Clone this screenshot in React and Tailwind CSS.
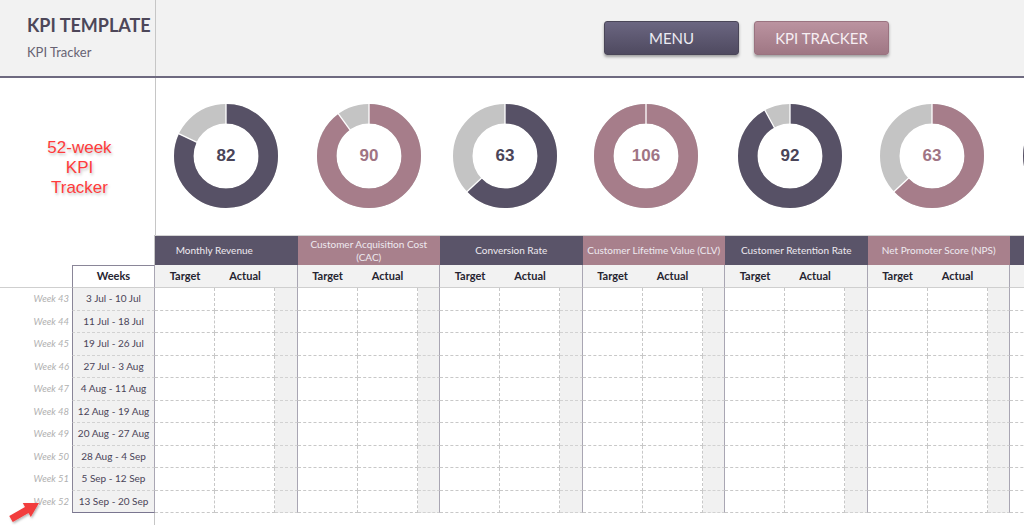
import React from 'react';

const DARK = '#575166';
const ROSE = '#a67d8a';

const DONUTS = [
  { value: 82, color: DARK, text: 'text-[#4a4458]', ml: 'ml-[17px]' },
  { value: 90, color: ROSE, text: 'text-[#a07484]', ml: 'ml-[37px]' },
  { value: 63, color: DARK, text: 'text-[#4a4458]', ml: 'ml-[30px]' },
  { value: 106, color: ROSE, text: 'text-[#a07484]', ml: 'ml-[35px]' },
  { value: 92, color: DARK, text: 'text-[#4a4458]', ml: 'ml-[38px]' },
  { value: 63, color: ROSE, text: 'text-[#a07484]', ml: 'ml-[36px]' },
  { value: 88, color: DARK, text: 'text-[#4a4458]', ml: 'ml-[37px]', hidden: true },
];

const KPIS = [
  { label: 'Monthly Revenue', bg: 'bg-[#5a5469]', pad: 'pr-[24px]' },
  { label: 'Customer Acquisition Cost (CAC)', bg: 'bg-[#a8808c]', pad: 'px-1' },
  { label: 'Conversion Rate', bg: 'bg-[#5a5469]', pad: 'px-1' },
  { label: 'Customer Lifetime Value (CLV)', bg: 'bg-[#a8808c]', pad: 'px-1' },
  { label: 'Customer Retention Rate', bg: 'bg-[#5a5469]', pad: 'px-1' },
  { label: 'Net Promoter Score (NPS)', bg: 'bg-[#a8808c]', pad: 'px-1' },
  { label: '', bg: 'bg-[#5a5469]', pad: 'px-1', hidden: true },
];

const WEEKS = [
  ['Week 43', '3 Jul - 10 Jul'],
  ['Week 44', '11 Jul - 18 Jul'],
  ['Week 45', '19 Jul - 26 Jul'],
  ['Week 46', '27 Jul - 3 Aug'],
  ['Week 47', '4 Aug - 11 Aug'],
  ['Week 48', '12 Aug - 19 Aug'],
  ['Week 49', '20 Aug - 27 Aug'],
  ['Week 50', '28 Aug - 4 Sep'],
  ['Week 51', '5 Sep - 12 Sep'],
  ['Week 52', '13 Sep - 20 Sep'],
];

const GRID = 'grid grid-cols-[72px_83px_repeat(7,60px_60px_22.5px)]';

function Donut({ value, color, text, ml, hidden }) {
  const r = 42.25;
  const c = 53;
  const p = Math.min(value, 100);
  const sep = (f) => {
    const a = (f / 100) * 2 * Math.PI - Math.PI / 2;
    return {
      x1: c + 32 * Math.cos(a),
      y1: c + 32 * Math.sin(a),
      x2: c + 53 * Math.cos(a),
      y2: c + 53 * Math.sin(a),
    };
  };
  return (
    <div className={`relative h-[106px] w-[106px] shrink-0 ${ml}`}>
      <svg width="106" height="106" viewBox="0 0 106 106">
        <circle cx={c} cy={c} r={r} fill="none" stroke="#c4c4c4" strokeWidth="19.5" />
        <circle
          cx={c}
          cy={c}
          r={r}
          fill="none"
          stroke={color}
          strokeWidth="19.5"
          pathLength="100"
          strokeDasharray={`${p} ${100 - p}`}
          transform={`rotate(-90 ${c} ${c})`}
        />
        <line {...sep(0)} stroke="#fff" strokeWidth="1.3" />
        {p < 100 && <line {...sep(p)} stroke="#fff" strokeWidth="1.3" />}
      </svg>
      {!hidden && (
        <div
          className={`absolute inset-0 flex items-center justify-center font-['Liberation_Sans',Arial,sans-serif] text-[17px] font-bold ${text}`}
        >
          {value}
        </div>
      )}
    </div>
  );
}

export default function App() {
  return (
    <div className="relative h-[525px] w-[1024px] overflow-hidden bg-white font-['Lato','Noto_Sans',sans-serif]">
      {/* top bar */}
      <div className="flex h-[78px] border-b-2 border-[#6e6a80] bg-[#f2f2f2]">
        <div className="w-[156px] shrink-0 border-r border-[#c6c6c6] pl-[27px] pt-[14px]">
          <div className="text-[18px] font-bold leading-[22px] text-[#4d4759]">KPI TEMPLATE</div>
          <div className="mt-[7px] text-[13px] leading-[18px] text-[#676273]">KPI Tracker</div>
        </div>
        <div className="flex flex-1 items-start gap-[15px] pl-[448px] pt-[21px]">
          <button className="flex h-[34px] w-[135px] items-center justify-center rounded-[3px] border border-[#4a4658] bg-gradient-to-b from-[#6b6681] to-[#4f4a60] text-[15px] text-[#ecebf2] shadow-[0_2px_3px_rgba(0,0,0,0.35)]">
            MENU
          </button>
          <button className="flex h-[34px] w-[135px] items-center justify-center rounded-[3px] border border-[#9a7380] bg-gradient-to-b from-[#bb93a0] to-[#9f7784] text-[15px] text-[#f6eef2] shadow-[0_2px_3px_rgba(0,0,0,0.35)]">
            KPI TRACKER
          </button>
        </div>
      </div>

      {/* donut band */}
      <div className="flex h-[157px]">
        <div className="w-[156px] shrink-0 border-r border-[#c6c6c6] pt-[60px] text-center font-['Liberation_Sans',Arial,sans-serif] text-[17px] leading-[20px] text-[#ff3b3b] [text-shadow:1px_2px_3px_rgba(0,0,0,0.25)]">
          <div className="pl-[4px]">
            52-week
            <br />
            KPI
            <br />
            Tracker
          </div>
        </div>
        <div className="flex flex-1 items-start pt-[25px]">
          {DONUTS.map((d, i) => (
            <Donut key={i} {...d} />
          ))}
        </div>
      </div>

      {/* KPI header row */}
      <div className={`${GRID} h-[30px]`}>
        <div className="col-span-2 border-r border-[#c6c6c6]" />
        {KPIS.map((k, i) => (
          <div
            key={i}
            className={`col-span-3 flex items-center justify-center border-t border-[#d4d4d4] text-center text-[10px] leading-[13px] text-[#eeeaf0] ${k.bg} ${k.pad}`}
          >
            {k.label}
          </div>
        ))}
      </div>

      {/* sub header */}
      <div className={`${GRID} h-[23px] text-[11px] font-bold text-[#262430]`}>
        <div className="border-b border-[#cfcfcf]" />
        <div className="flex items-center justify-center border-l border-t border-r border-b border-l-[#8a8698] border-t-[#8a8698] border-r-[#a9a6b3] border-b-[#cfcfcf] bg-white">
          Weeks
        </div>
        {KPIS.map((k, i) => (
          <React.Fragment key={i}>
            <div className="flex items-center justify-center border-b border-[#cfcfcf] bg-[#f2f2f2]">
              {!k.hidden && 'Target'}
            </div>
            <div className="flex items-center justify-center border-b border-[#cfcfcf] bg-[#f2f2f2]">
              {!k.hidden && 'Actual'}
            </div>
            <div className="border-b border-r border-b-[#cfcfcf] border-r-[#a9a6b3] bg-[#f2f2f2]" />
          </React.Fragment>
        ))}
      </div>

      {/* data rows */}
      {WEEKS.map(([w, d], i) => {
        const last = i === WEEKS.length - 1;
        return (
          <div key={w} className={`${GRID} h-[22.5px]`}>
            <div className="flex items-center justify-end pr-[3px] text-[9.5px] italic text-[#b0b0b0]">{w}</div>
            <div
              className={`flex items-center justify-center border-l border-r border-b border-l-[#8a8698] border-r-[#a9a6b3] bg-[#f1f1f1] text-[10px] text-[#4a4458] ${
                last ? 'border-b-[#7a7690]' : 'border-b-[#d2d2d2] [border-bottom-style:dashed]'
              }`}
            >
              {d}
            </div>
            {KPIS.map((k, j) => (
              <React.Fragment key={j}>
                <div className="border-b border-r border-dashed border-[#c8c8c8] bg-white" />
                <div className="border-b border-r border-dashed border-[#c8c8c8] bg-white" />
                <div className="border-b border-r border-b-[#d2d2d2] border-r-[#a9a6b3] bg-[#f1f1f1] [border-bottom-style:dashed]" />
              </React.Fragment>
            ))}
          </div>
        );
      })}

      <div className={`${GRID} h-[20px]`}>
        <div className="col-span-2 border-r border-[#c6c6c6]" />
      </div>

      {/* red arrow */}
      <svg className="absolute left-[3px] top-[497px]" width="44" height="28" viewBox="0 0 44 28">
        <defs>
          <filter id="sh" x="-30%" y="-30%" width="160%" height="160%">
            <feDropShadow dx="1" dy="1.5" stdDeviation="1" floodColor="#000" floodOpacity="0.3" />
          </filter>
        </defs>
        <polygon
          points="6.25,19 22,10 19.8,6 36,6 27.8,20 25.5,16 9.75,25"
          fill="#f23c3c"
          filter="url(#sh)"
        />
      </svg>
    </div>
  );
}
